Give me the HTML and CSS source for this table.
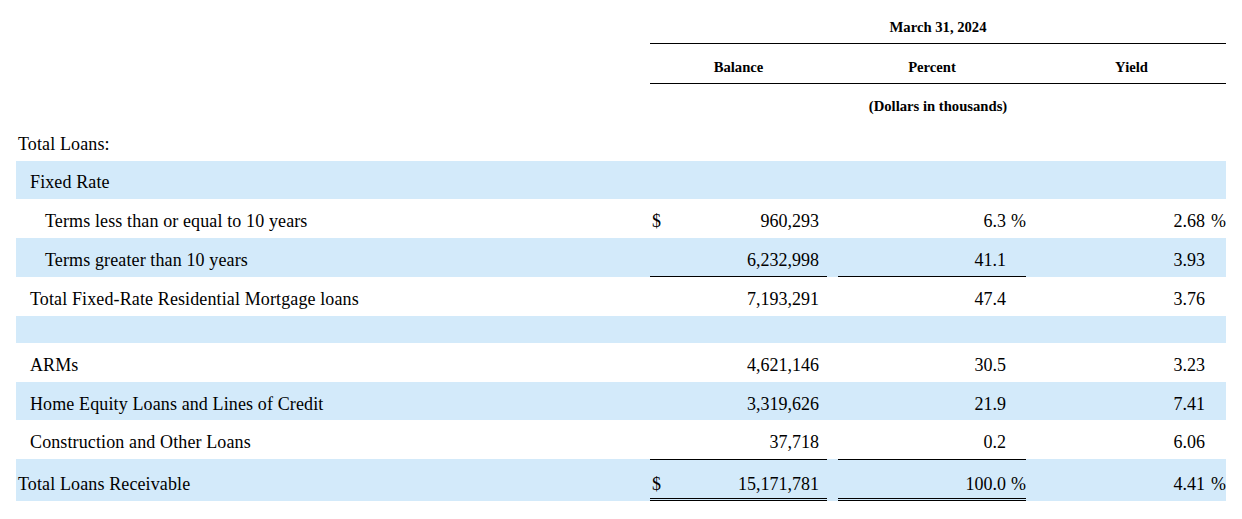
FILE: index.html
```html
<!DOCTYPE html>
<html lang="en">
<head>
<meta charset="utf-8">
<title>Total Loans</title>
<link rel="stylesheet" href="styles.css">
</head>
<body>
<div class="wrap">
<table class="loans">
  <colgroup>
    <col class="c-label">
    <col class="c-cur">
    <col class="c-bal">
    <col class="c-gap">
    <col class="c-pct">
    <col class="c-sign">
    <col class="c-gap">
    <col class="c-yld">
    <col class="c-sign">
  </colgroup>
  <tbody>
    <tr class="h1">
      <td></td>
      <td colspan="8" class="hdr rule">March 31, 2024</td>
    </tr>
    <tr class="h2">
      <td></td>
      <td colspan="2" class="hdr rule">Balance</td>
      <td class="rule"></td>
      <td colspan="2" class="hdr rule">Percent</td>
      <td class="rule"></td>
      <td colspan="2" class="hdr rule">Yield</td>
    </tr>
    <tr class="h3">
      <td></td>
      <td colspan="8" class="hdr">(Dollars in thousands)</td>
    </tr>

    <tr class="row short-a">
      <td class="lbl l0">Total Loans:</td>
      <td colspan="8"></td>
    </tr>
    <tr class="row shade short-a">
      <td class="lbl l1">Fixed Rate</td>
      <td colspan="8"></td>
    </tr>
    <tr class="row">
      <td class="lbl l2">Terms less than or equal to 10 years</td>
      <td class="cur">$</td>
      <td class="num bal">960,293</td>
      <td></td>
      <td class="num pc">6.3</td>
      <td class="sign">%</td>
      <td></td>
      <td class="num yl">2.68</td>
      <td class="sign">%</td>
    </tr>
    <tr class="row shade">
      <td class="lbl l2">Terms greater than 10 years</td>
      <td class="cur ul"></td>
      <td class="num bal ul">6,232,998</td>
      <td></td>
      <td class="num pc ul">41.1</td>
      <td class="sign ul"></td>
      <td></td>
      <td class="num yl">3.93</td>
      <td class="sign"></td>
    </tr>
    <tr class="row">
      <td class="lbl l1">Total Fixed-Rate Residential Mortgage loans</td>
      <td class="cur"></td>
      <td class="num bal">7,193,291</td>
      <td></td>
      <td class="num pc">47.4</td>
      <td class="sign"></td>
      <td></td>
      <td class="num yl">3.76</td>
      <td class="sign"></td>
    </tr>
    <tr class="spacer shade">
      <td colspan="9"></td>
    </tr>
    <tr class="row">
      <td class="lbl l1">ARMs</td>
      <td class="cur"></td>
      <td class="num bal">4,621,146</td>
      <td></td>
      <td class="num pc">30.5</td>
      <td class="sign"></td>
      <td></td>
      <td class="num yl">3.23</td>
      <td class="sign"></td>
    </tr>
    <tr class="row shade short-b">
      <td class="lbl l1">Home Equity Loans and Lines of Credit</td>
      <td class="cur"></td>
      <td class="num bal">3,319,626</td>
      <td></td>
      <td class="num pc">21.9</td>
      <td class="sign"></td>
      <td></td>
      <td class="num yl">7.41</td>
      <td class="sign"></td>
    </tr>
    <tr class="row">
      <td class="lbl l1">Construction and Other Loans</td>
      <td class="cur"></td>
      <td class="num bal">37,718</td>
      <td></td>
      <td class="num pc">0.2</td>
      <td class="sign"></td>
      <td></td>
      <td class="num yl">6.06</td>
      <td class="sign"></td>
    </tr>
    <tr class="row shade total">
      <td class="lbl l0">Total Loans Receivable</td>
      <td class="cur dbl">$</td>
      <td class="num bal dbl">15,171,781</td>
      <td></td>
      <td class="num pc dbl">100.0</td>
      <td class="sign dbl">%</td>
      <td></td>
      <td class="num yl">4.41</td>
      <td class="sign">%</td>
    </tr>
  </tbody>
</table>
</div>
</body>
</html>
```

FILE: styles.css
```css
html, body {
  margin: 0;
  padding: 0;
  background: #ffffff;
}

body {
  font-family: "Liberation Serif", "Times New Roman", serif;
  color: #000000;
}

.wrap {
  padding: 0 16px;
}

.loans {
  width: 1210px;
  table-layout: fixed;
  border-collapse: separate;
  border-spacing: 0;
}

.c-label { width: 634px; }
.c-cur { width: 20px; }
.c-bal { width: 157px; }
.c-gap { width: 11px; }
.c-pct { width: 168px; }
.c-sign { width: 20px; }
.c-yld { width: 169px; }

.loans td {
  padding: 0;
  vertical-align: top;
  white-space: nowrap;
}

/* header rows */
.loans .hdr {
  font-size: 14.67px;
  line-height: 17px;
  font-weight: bold;
  text-align: center;
}

.h1 td { padding-top: 19px; padding-bottom: 7px; }
.h2 td { padding-top: 15px; padding-bottom: 7px; }
.h3 td { padding-top: 14px; padding-bottom: 8px; }

.loans .rule { border-bottom: 1px solid #000000; }

/* body rows */
.loans .row td {
  font-size: 18px;
  line-height: 21px;
  padding-top: 12px;
  padding-bottom: 6px;
}

.loans .row.short-a td { padding-top: 11px; padding-bottom: 6px; }
.loans .row.short-b td { padding-top: 12px; padding-bottom: 5px; }

.shade > td { background: #d3eafa; }

.loans .spacer td { height: 27px; padding: 0; }

.loans .lbl { text-align: left; letter-spacing: 0.12px; }
.loans .l0 { padding-left: 2px; }
.loans .l1 { padding-left: 14px; }
.loans .l2 { padding-left: 29px; }

.loans .cur { text-align: left; padding-left: 2px; }
.loans .num { text-align: right; }
.loans .bal { padding-right: 8px; }
.loans .pc { padding-right: 0; }
.loans .yl { padding-right: 1px; }
.loans .sign { text-align: right; padding-right: 0; }

.loans .row td.ul {
  border-bottom: 1px solid #000000;
  padding-bottom: 5px;
}

/* total row */
.loans .row.total td {
  padding-top: 15px;
  padding-bottom: 6px;
}

.loans .row.total td.dbl {
  border-top: 1px solid #000000;
  border-bottom: 3px double #000000;
  padding-top: 14px;
  padding-bottom: 3px;
}
```
